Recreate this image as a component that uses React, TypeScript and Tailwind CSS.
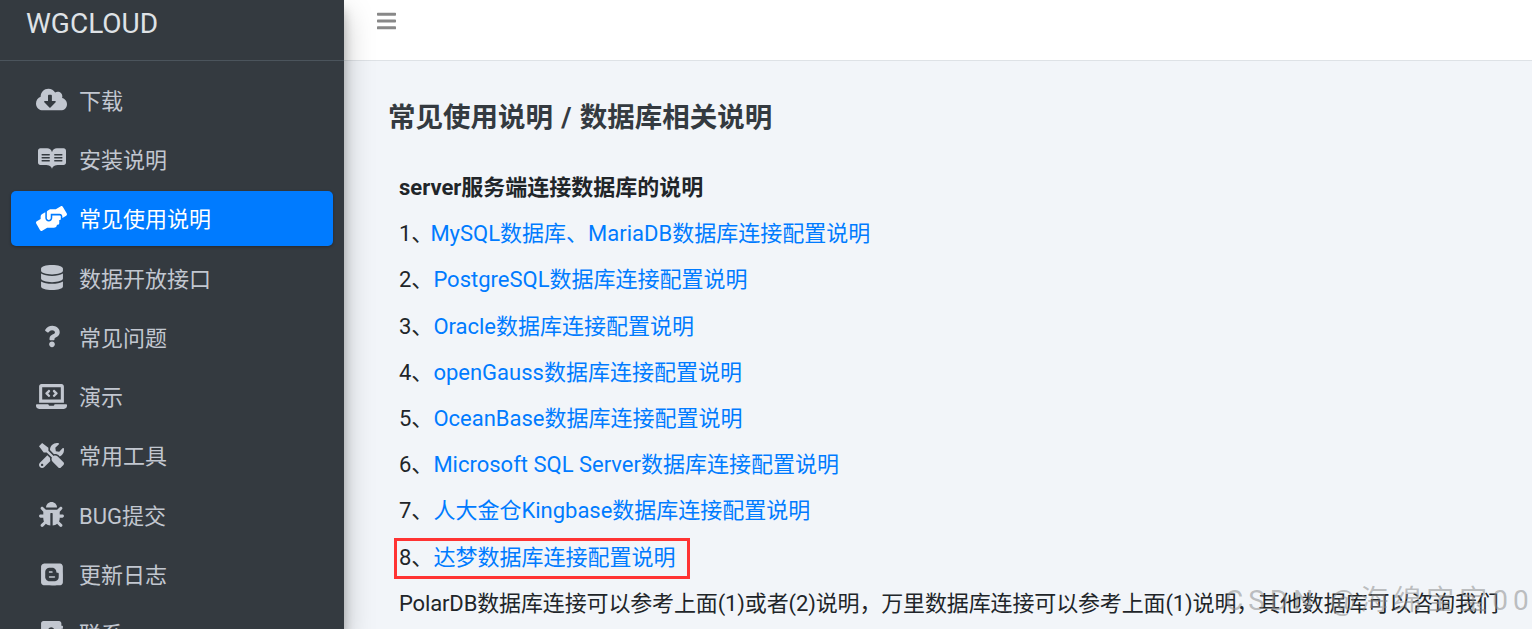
import React from "react";
import { FaCloudDownloadAlt, FaReadme, FaHandsHelping, FaDatabase, FaQuestion, FaLaptopCode, FaTools, FaBug, FaBlogger, FaAddressBook, FaBars } from "react-icons/fa";

const nav = [
  { icon: FaCloudDownloadAlt, w: "w-[31px]", label: "下载" },
  { icon: FaReadme, w: "w-[28px]", label: "安装说明" },
  { icon: FaHandsHelping, w: "w-[31px]", label: "常见使用说明", active: true },
  { icon: FaDatabase, w: "w-[22px]", label: "数据开放接口" },
  { icon: FaQuestion, w: "w-[16px]", label: "常见问题" },
  { icon: FaLaptopCode, w: "w-[31px]", label: "演示" },
  { icon: FaTools, w: "w-[25px]", label: "常用工具" },
  { icon: FaBug, w: "w-[25px]", label: "BUG提交" },
  { icon: FaBlogger, w: "w-[22px]", label: "更新日志" },
  { icon: FaAddressBook, w: "w-[22px]", label: "联系" },
];

const links = [
  ["1、", "MySQL数据库、MariaDB数据库连接配置说明"],
  ["2、", "PostgreSQL数据库连接配置说明"],
  ["3、", "Oracle数据库连接配置说明"],
  ["4、", "openGauss数据库连接配置说明"],
  ["5、", "OceanBase数据库连接配置说明"],
  ["6、", "Microsoft SQL Server数据库连接配置说明"],
  ["7、", "人大金仓Kingbase数据库连接配置说明"],
];

export default function App() {
  return (
    <div className="relative flex h-[629px] w-[1532px] overflow-hidden bg-[#f2f5f9] font-['Roboto','Noto_Sans_CJK_SC',sans-serif] text-[22px] text-[#212529]">
      <aside className="z-10 flex w-[344px] shrink-0 flex-col bg-[#343a40] shadow-[0_14px_28px_rgba(0,0,0,0.25),0_10px_10px_rgba(0,0,0,0.22)]">
        <div className="flex h-[61px] shrink-0 items-start border-b border-[#4b545c] pl-[26px] pt-[6px] text-[28px] leading-[36px] text-[#dfe2e6]">WGCLOUD</div>
        <nav className="flex flex-col gap-[4px] px-[11px] pt-[11px]">
          {nav.map((n) => (
            <div key={n.label} className={`flex h-[55.3px] shrink-0 items-center rounded-[5px] pl-[25px] ${n.active ? "bg-[#007bff] text-white shadow-[0_1px_3px_rgba(0,0,0,0.3)]" : "text-[#c2c7d0]"}`}>
              <span className="flex w-[31px] justify-center"><n.icon className={`h-[25px] ${n.w}`} /></span>
              <span className="ml-[12px] pt-[4px] leading-[30px]">{n.label}</span>
            </div>
          ))}
        </nav>
      </aside>
      <main className="flex min-w-0 flex-1 flex-col">
        <header className="flex h-[61px] shrink-0 items-start border-b border-[#dee2e6] bg-white pl-[33px] pt-[10px] text-[#888]">
          <FaBars className="h-[22px] w-[19px]" />
        </header>
        <div className="pl-[44px] pt-[39px]">
          <h1 className="text-[27.5px] font-bold leading-[36px] text-[#343a40] [word-spacing:1.5px]">常见使用说明 / 数据库相关说明</h1>
          <div className="pl-[11px] pt-[37px] whitespace-nowrap">
            <p className="h-[46.2px] font-bold leading-[30px]">server服务端连接数据库的说明</p>
            {links.map(([n, t], i) => (
              <p key={n} className="h-[46.2px] leading-[30px]">{n}<a className={`text-[#007bff] ${i === 0 ? "-ml-[3px]" : ""}`}>{t}</a></p>
            ))}
            <p className="relative h-[46.2px] leading-[30px]">
              8、<a className="text-[#007bff]">达梦数据库连接配置说明</a>
              <span className="absolute left-[-5px] top-[-5px] h-[41px] w-[296px] border-[3px] border-[#ff3333]" />
            </p>
            <p className="h-[46.2px] leading-[30px] tracking-[-0.14px]">PolarDB数据库连接可以参考上面(1)或者(2)说明，万里数据库连接可以参考上面(1)说明，其他数据库可以咨询我们</p>
          </div>
        </div>
      </main>
      <div className="absolute left-[1225px] top-[583px] z-20 whitespace-nowrap text-[28px] leading-[36px] tracking-[5px] text-[rgba(140,140,140,0.55)]">CSDN @海绵宝宝00</div>
    </div>
  );
}
